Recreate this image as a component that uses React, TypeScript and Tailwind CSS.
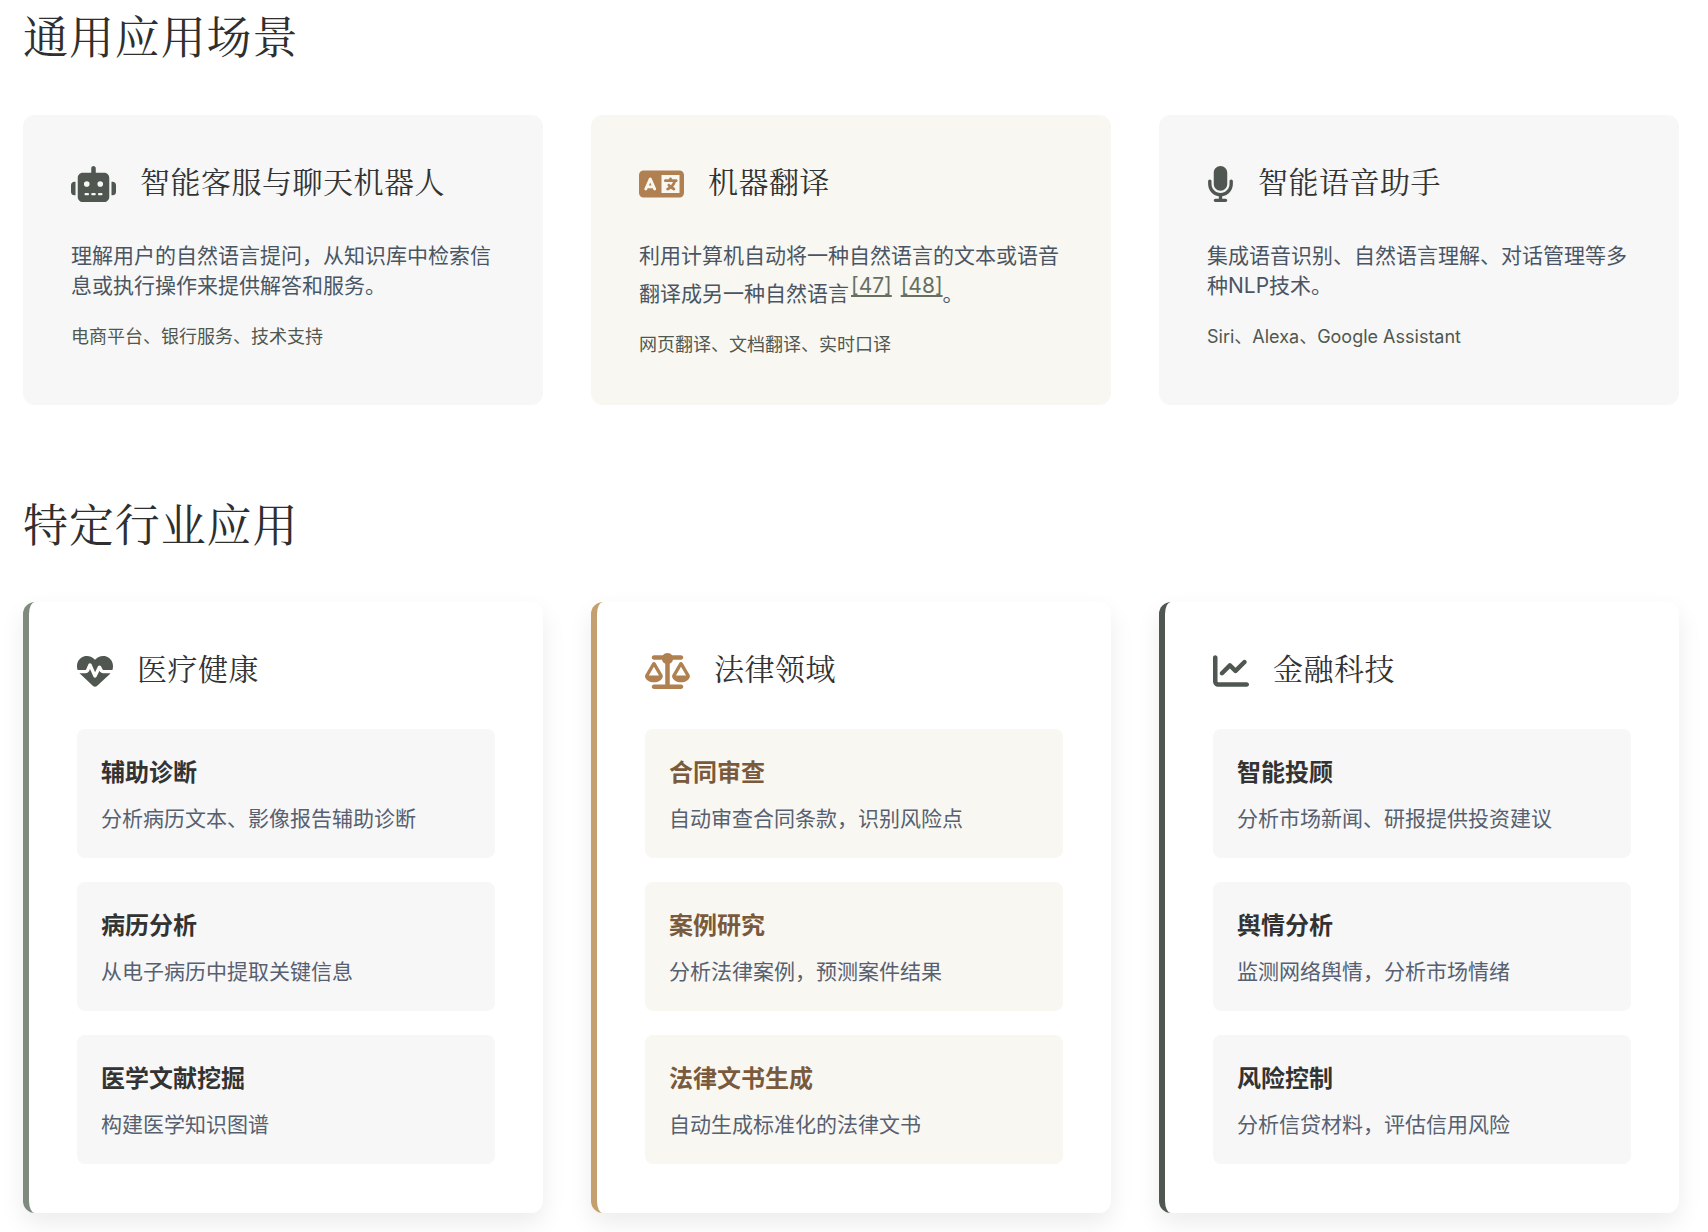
import { ReactNode } from "react";
import {
  FaRobot,
  FaLanguage,
  FaMicrophone,
  FaHeartPulse,
  FaScaleBalanced,
  FaChartLine,
} from "react-icons/fa6";

const serif = "font-['Noto_Serif_CJK_SC','Liberation_Serif',serif]";

function Heading({ children }: { children: ReactNode }) {
  return (
    <h2 className={`${serif} text-[45px] leading-[54px] tracking-[0.9px] font-normal text-[#2f2f2f] mb-[53px]`}>
      {children}
    </h2>
  );
}

function CardTitle({ icon, children }: { icon: ReactNode; children: ReactNode }) {
  return (
    <div className="flex items-center gap-6 h-9">
      {icon}
      <h3 className={`${serif} text-[30px] leading-9 tracking-[0.5px] font-normal text-[#333333] mb-[2px]`}>{children}</h3>
    </div>
  );
}

const general = [
  {
    title: "智能客服与聊天机器人",
    icon: <FaRobot className="w-[45px] h-9 mt-[5px] text-[#4f5750]" />,
    bg: "bg-[#f7f7f7]",
    text: <>理解用户的自然语言提问，从知识库中检索信息或执行操作来提供解答和服务。</>,
    note: "电商平台、银行服务、技术支持",
  },
  {
    title: "机器翻译",
    icon: <FaLanguage className="w-[45px] h-9 mt-[5px] text-[#b08050]" />,
    bg: "bg-[#f9f7f2]",
    text: (
      <>
        利用计算机自动将一种自然语言的文本或语音翻译成另一种自然语言
        <a className="align-super text-[#66705f] underline ml-[2px]">[47]</a>{" "}
        <a className="align-super text-[#66705f] underline ml-[3px]">[48]</a>。
      </>
    ),
    note: "网页翻译、文档翻译、实时口译",
  },
  {
    title: "智能语音助手",
    icon: <FaMicrophone className="w-[27px] h-9 mt-[5px] text-[#4f5750]" />,
    bg: "bg-[#f7f7f7]",
    text: <>集成语音识别、自然语言理解、对话管理等多种NLP技术。</>,
    note: "Siri、Alexa、Google Assistant",
  },
];

const industries = [
  {
    title: "医疗健康",
    icon: <FaHeartPulse className="w-9 h-9 mt-[5px] text-[#4f5750]" />,
    border: "border-[#7f8a7e]",
    itemBg: "bg-[#f7f7f7]",
    itemTitle: "text-[#333333]",
    items: [
      ["辅助诊断", "分析病历文本、影像报告辅助诊断"],
      ["病历分析", "从电子病历中提取关键信息"],
      ["医学文献挖掘", "构建医学知识图谱"],
    ],
  },
  {
    title: "法律领域",
    icon: <FaScaleBalanced className="w-[45px] h-9 mt-[5px] text-[#b08050]" />,
    border: "border-[#c4a06e]",
    itemBg: "bg-[#f9f7f2]",
    itemTitle: "text-[#7a5a3c]",
    items: [
      ["合同审查", "自动审查合同条款，识别风险点"],
      ["案例研究", "分析法律案例，预测案件结果"],
      ["法律文书生成", "自动生成标准化的法律文书"],
    ],
  },
  {
    title: "金融科技",
    icon: <FaChartLine className="w-9 h-9 mt-[5px] text-[#4f5750]" />,
    border: "border-[#4f5750]",
    itemBg: "bg-[#f7f7f7]",
    itemTitle: "text-[#333333]",
    items: [
      ["智能投顾", "分析市场新闻、研报提供投资建议"],
      ["舆情分析", "监测网络舆情，分析市场情绪"],
      ["风险控制", "分析信贷材料，评估信用风险"],
    ],
  },
];

export default function App() {
  return (
    <div className="bg-white w-[1708px] h-[1232px] overflow-hidden pl-[23px] pt-2 font-['Inter','Noto_Sans_CJK_SC',sans-serif]">
      <div className="w-[1656px]">
        {/* General scenarios */}
        <Heading>通用应用场景</Heading>
        <div className="grid grid-cols-3 gap-12">
          {general.map((c) => (
            <div key={c.title} className={`${c.bg} rounded-xl px-12 pt-12 pb-[47px]`}>
              <CardTitle icon={c.icon}>{c.title}</CardTitle>
              <p className="mt-[42px] text-[21px] leading-[30px] text-[#4a5563]">{c.text}</p>
              <p className="mt-[22px] text-[18px] leading-[27px] text-[#4f5750]">{c.note}</p>
            </div>
          ))}
        </div>

        {/* Industry applications */}
        <div className="mt-[91px] -mb-px">
          <Heading>特定行业应用</Heading>
        </div>
        <div className="grid grid-cols-3 gap-12">
          {industries.map((c) => (
            <div
              key={c.title}
              className={`bg-white rounded-xl border-l-[6px] ${c.border} px-12 pt-12 pb-[49px] shadow-[0_10px_25px_rgba(0,0,0,0.08)]`}
            >
              <CardTitle icon={c.icon}>{c.title}</CardTitle>
              <div className="mt-[43px] flex flex-col gap-6">
                {c.items.map(([name, desc]) => (
                  <div key={name} className={`${c.itemBg} rounded-lg px-6 pt-[26px] h-[129px]`}>
                    <h4 className={`text-[24px] leading-9 font-bold ${c.itemTitle}`}>{name}</h4>
                    <p className="mt-[13px] text-[21px] leading-[30px] text-[#566070]">{desc}</p>
                  </div>
                ))}
              </div>
            </div>
          ))}
        </div>
      </div>
    </div>
  );
}
